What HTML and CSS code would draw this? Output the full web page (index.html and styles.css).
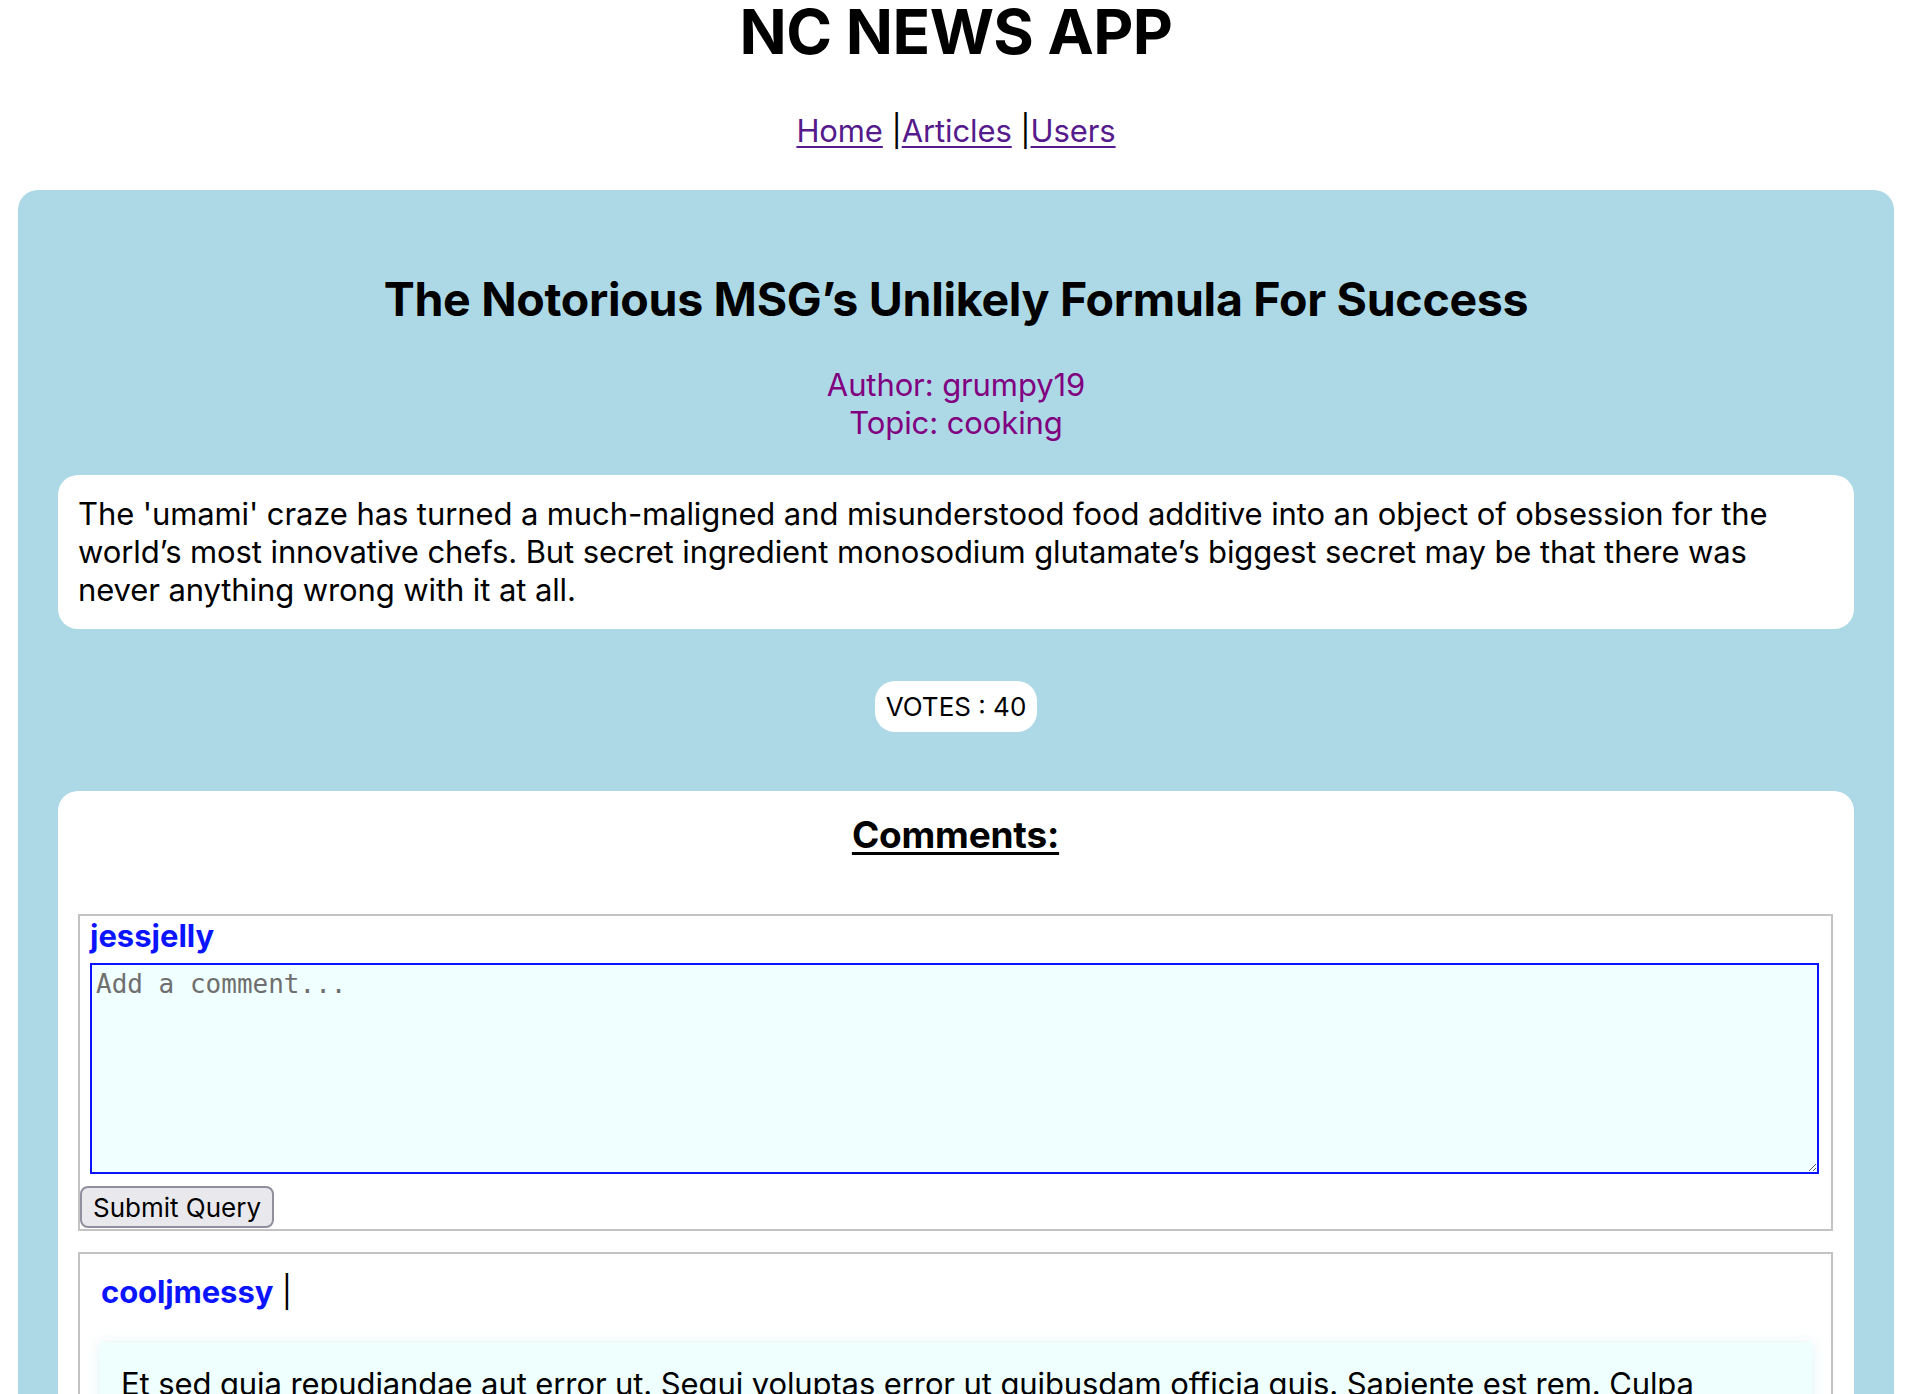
FILE: index.html
```html
<!DOCTYPE html>
<html lang="en">
<head>
<meta charset="utf-8">
<title>NC News App</title>
<link rel="stylesheet" href="styles.css">
</head>
<body>
<header class="site-header">
  <h1 class="site-title">NC NEWS APP</h1>
  <nav class="site-nav"><a href="#" class="nav-link">Home</a> |<a href="#" class="nav-link">Articles</a> |<a href="#" class="nav-link">Users</a></nav>
</header>
<main class="article">
  <h2 class="article-title">The Notorious MSG’s Unlikely Formula For Success</h2>
  <div class="article-meta">
    <div>Author: grumpy19</div>
    <div>Topic: cooking</div>
  </div>
  <p class="article-body">The 'umami' craze has turned a much-maligned and misunderstood food additive into an object of obsession for the world’s most innovative chefs. But secret ingredient monosodium glutamate’s biggest secret may be that there was never anything wrong with it at all.</p>
  <div class="votes-row"><span class="votes">VOTES : 40</span></div>
  <section class="comments">
    <h3 class="comments-title">Comments:</h3>
    <form class="comment-form">
      <label class="comment-user" for="new-comment">jessjelly</label>
      <textarea id="new-comment" class="comment-input" placeholder="Add a comment..."></textarea>
      <button type="button" class="submit-btn">Submit Query</button>
    </form>
    <article class="comment">
      <div class="comment-head"><span class="comment-author">cooljmessy</span> |</div>
      <p class="comment-body">Et sed quia repudiandae aut error ut. Sequi voluptas error ut quibusdam officia quis. Sapiente est rem. Culpa consequatur ducimus qui voluptatum necessitatibus error. Est voluptatem aut.</p>
    </article>
  </section>
</main>
</body>
</html>
```

FILE: styles.css
```css
html, body {
  background: #ffffff;
}

body {
  margin: 0;
  padding: 0 4px 0 0;
  font-family: Inter, "Noto Sans", sans-serif;
  font-size: 31px;
  letter-spacing: -0.1px;
  color: #000000;
}

.site-header {
  text-align: center;
}

.site-title {
  margin: 0;
  font-size: 62px;
  line-height: 64px;
  font-weight: 700;
  letter-spacing: -0.5px;
}

.site-nav {
  margin-top: 48px;
  font-size: 31px;
  line-height: 38px;
  letter-spacing: -0.1px;
}

.nav-link {
  color: #551a8b;
  text-decoration: underline;
  text-decoration-thickness: 2px;
  text-underline-offset: 4px;
}

.article {
  margin: 40px 18px 0 18px;
  padding: 40px 40px 0 40px;
  background: #add8e6;
  border-radius: 20px;
}

.article-title {
  margin: 40px 0 38px 0;
  font-size: 46.5px;
  line-height: 58px;
  font-weight: 700;
  letter-spacing: -0.3px;
  text-align: center;
}

.article-meta {
  color: #800080;
  text-align: center;
  line-height: 38px;
}

.article-body {
  margin: 33px 0 0 0;
  padding: 20px 24px 20px 20px;
  background: #ffffff;
  border-radius: 20px;
  line-height: 38px;
}

.votes-row {
  display: flex;
  justify-content: center;
  margin-top: 52px;
}

.votes {
  display: inline-block;
  background: #ffffff;
  border-radius: 20px;
  padding: 9px 11px;
  font-size: 26px;
  line-height: 33px;
  letter-spacing: 0;
}

.comments {
  margin-top: 59px;
  padding: 1px 21px 0 20px;
  background: #ffffff;
  border-radius: 20px 20px 0 0;
  min-height: 700px;
}

.comments-title {
  margin: 21px 0 0 0;
  font-size: 37px;
  line-height: 44px;
  font-weight: 700;
  letter-spacing: -0.2px;
  text-align: center;
  text-decoration: underline;
  text-decoration-thickness: 3px;
  text-underline-offset: 4px;
}

.comment-form {
  margin-top: 57px;
  border: 2px solid #c4c2c4;
  padding: 1px 0 1px 0;
}

.comment-user {
  display: block;
  margin-left: 10px;
  color: #0a14ff;
  font-weight: 700;
  line-height: 38px;
  letter-spacing: 0;
}

.comment-input {
  display: block;
  box-sizing: border-box;
  width: calc(100% - 22px);
  height: 211px;
  margin: 8px 12px 0 10px;
  padding: 4px;
  border: 2px solid #0a14ff;
  background: #f0ffff;
  font-family: "DejaVu Sans Mono", "Liberation Mono", monospace;
  font-size: 26px;
  letter-spacing: 0;
  resize: both;
}

.comment-input::placeholder {
  color: #6f6f6f;
}

.submit-btn {
  display: block;
  margin-top: 12px;
  height: 42px;
  padding: 0 11px;
  background: #e9e9ed;
  border: 2px solid #8f8f9d;
  border-radius: 8px;
  font-family: Inter, "Noto Sans", sans-serif;
  font-size: 26px;
  letter-spacing: 0;
  color: #000000;
}

.comment {
  margin-top: 21px;
  border: 2px solid #c4c2c4;
  padding: 19px 19px 20px 20px;
}

.comment-head {
  line-height: 38px;
}

.comment-author {
  color: #0a14ff;
  font-weight: 700;
  margin-left: 1px;
}

.comment-body {
  margin: 32px 0 0 0;
  padding: 22px 20px 22px 21px;
  background: #eefffd;
  box-shadow: 0 0 12px rgba(170, 220, 220, 0.35);
  line-height: 38px;
}
```
